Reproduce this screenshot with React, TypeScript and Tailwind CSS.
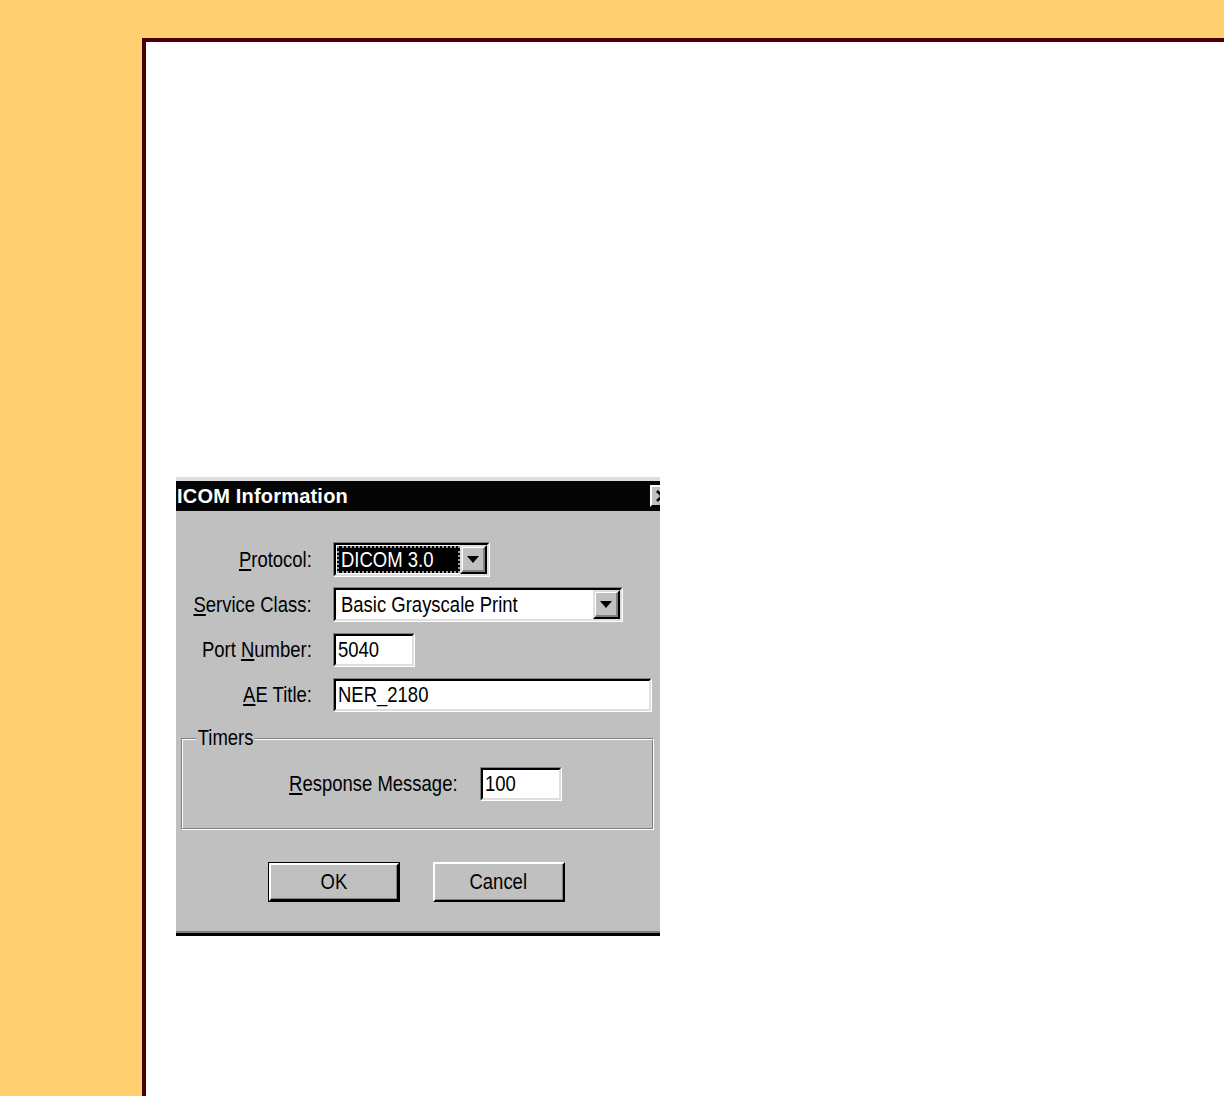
import React from "react";

const font = { fontFamily: '"Liberation Sans", Arial, sans-serif' };

function Sunken({ className, children }: { className: string; children?: React.ReactNode }) {
  return (
    <div className={`border border-t-[#808080] border-l-[#808080] border-b-white border-r-white ${className}`}>
      <div className="flex h-full w-full items-center overflow-hidden border-2 border-t-black border-l-black border-b-[#dfdfdf] border-r-[#dfdfdf] bg-white">
        {children}
      </div>
    </div>
  );
}

function DropButton() {
  return (
    <div className="h-full w-[27px] shrink-0 border-2 border-t-[#dfdfdf] border-l-[#dfdfdf] border-b-black border-r-black bg-[#c0c0c0]">
      <div className="flex h-full w-full items-center justify-center border-t border-l border-t-white border-l-white border-b-2 border-r-2 border-b-[#808080] border-r-[#808080]">
        <div className="h-0 w-0 border-x-[6px] border-x-transparent border-t-[7px] border-t-black" />
      </div>
    </div>
  );
}

function Label({ className, children }: { className: string; children: React.ReactNode }) {
  return (
    <div className={`flex shrink-0 justify-end ${className}`}>
      <span className="inline-block shrink-0 origin-right scale-x-[0.84] whitespace-nowrap text-[22px] leading-none text-black">
        {children}
      </span>
    </div>
  );
}

function FieldText({ children, className = "" }: { children: React.ReactNode; className?: string }) {
  return (
    <span className={`inline-block shrink-0 origin-left scale-x-[0.84] whitespace-nowrap text-[22px] leading-none ${className}`}>
      {children}
    </span>
  );
}

export default function App() {
  return (
    <div className="h-[1096px] w-full overflow-hidden bg-[#ffcf70] pl-[142px] pt-[38px]" style={font}>
      <div className="h-full border-l-4 border-t-4 border-[#4d0000] bg-white pl-[30px] pt-[435px]">
        <div className="flex w-[484px] flex-col">
          <div className="h-[4px] bg-[#dedede]" />
          <div className="flex h-[30px] items-center justify-between bg-[#050505]">
            <span className="pl-[1px] text-[20px] font-bold leading-none tracking-[0.2px] text-white">ICOM Information</span>
            <div className="mb-[1px] h-[22px] w-[10px] overflow-hidden">
              <div className="flex h-[22px] w-[24px] items-center justify-center border-t-2 border-l-2 border-t-white border-l-white border-b-2 border-r-2 border-b-black border-r-[#808080] bg-[#c0c0c0]">
                <svg width="12" height="12" viewBox="0 0 12 12">
                  <path d="M1 1 L11 11 M11 1 L1 11" stroke="black" strokeWidth="2.5" />
                </svg>
              </div>
            </div>
          </div>
          <div className="flex flex-col bg-[#c0c0c0] pb-[29px] pt-[31px]">
            <div className="flex flex-col gap-[10px]">
              <div className="flex h-[35px] items-center">
                <Label className="w-[136px]">
                  <u className="underline-offset-2">P</u>rotocol:
                </Label>
                <Sunken className="ml-[21px] h-[35px] w-[157px]">
                  <div className="ml-[1px] flex h-[27px] flex-1 items-center border-2 border-dotted border-[#9a9a9a] bg-black pl-[2px] text-white">
                    <FieldText>DICOM 3.0</FieldText>
                  </div>
                  <DropButton />
                </Sunken>
              </div>
              <div className="flex h-[35px] items-center">
                <Label className="w-[136px]">
                  <u className="underline-offset-2">S</u>ervice Class:
                </Label>
                <Sunken className="ml-[21px] h-[35px] w-[290px]">
                  <div className="flex flex-1 items-center pl-[5px]">
                    <FieldText>Basic Grayscale Print</FieldText>
                  </div>
                  <DropButton />
                </Sunken>
              </div>
              <div className="flex h-[35px] items-center">
                <Label className="w-[136px]">
                  Port <u className="underline-offset-2">N</u>umber:
                </Label>
                <Sunken className="ml-[21px] h-[34px] w-[82px]">
                  <FieldText className="ml-[2px]">5040</FieldText>
                </Sunken>
              </div>
              <div className="mt-[1px] flex h-[34px] items-center">
                <Label className="w-[136px]">
                  <u className="underline-offset-2">A</u>E Title:
                </Label>
                <Sunken className="ml-[21px] h-[34px] w-[319px]">
                  <FieldText className="ml-[2px]">NER_2180</FieldText>
                </Sunken>
              </div>
            </div>

            <div className="relative ml-[5px] mt-[26px] h-[92px] w-[473px] border border-t-[#808080] border-l-[#808080] border-b-white border-r-white">
              <div className="flex h-full w-full items-center border border-t-white border-l-white border-b-[#808080] border-r-[#808080]">
                <Label className="w-[275px]">
                  <u className="underline-offset-2">R</u>esponse Message:
                </Label>
                <Sunken className="ml-[22px] h-[34px] w-[82px]">
                  <FieldText className="ml-[2px]">100</FieldText>
                </Sunken>
              </div>
              <span className="absolute -top-[12px] left-[14px] inline-block origin-left scale-x-[0.84] bg-[#c0c0c0] px-[2px] text-[22px] leading-none">
                Timers
              </span>
            </div>

            <div className="mt-[32px] flex gap-[33px] pl-[92px]">
              <div className="h-[40px] w-[132px] border border-black">
                <div className="h-full w-full border-2 border-t-white border-l-white border-b-black border-r-black">
                  <div className="flex h-full w-full items-center justify-center border-b border-r border-b-[#808080] border-r-[#808080]">
                    <span className="inline-block scale-x-[0.84] text-[22px] leading-none">OK</span>
                  </div>
                </div>
              </div>
              <div className="h-[40px] w-[132px] border-2 border-t-white border-l-white border-b-black border-r-black">
                <div className="flex h-full w-full items-center justify-center border-b border-r border-b-[#808080] border-r-[#808080]">
                  <span className="inline-block scale-x-[0.84] text-[22px] leading-none">Cancel</span>
                </div>
              </div>
            </div>
          </div>
          <div className="h-[2px] bg-[#808080]" />
          <div className="h-[3px] bg-black" />
        </div>
      </div>
    </div>
  );
}
